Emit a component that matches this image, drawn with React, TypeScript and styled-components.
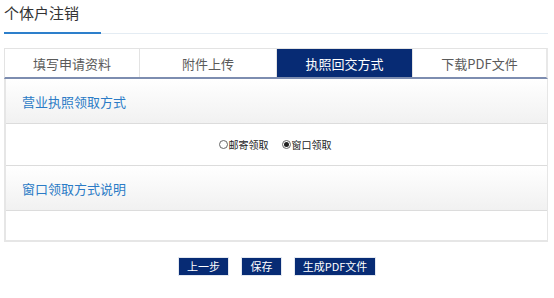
import React from "react";
import styled, { createGlobalStyle } from "styled-components";

const Global = createGlobalStyle`
  html, body { margin: 0; padding: 0; background: #fff; }
  body { font-family: "Noto Sans CJK SC", "Noto Sans", sans-serif; }
`;

const Page = styled.div`
  padding: 0 6px 0 4px;
  width: 554px;
  box-sizing: border-box;
`;

const TitleBar = styled.div`
  position: relative;
  height: 34px;
  border-bottom: 1px solid #e4ecf3;
  box-sizing: border-box;
`;

const Title = styled.h1`
  margin: 0;
  padding-top: 3px;
  font-size: 15px;
  line-height: 20px;
  font-weight: normal;
  color: #333;
`;

const TitleUnderline = styled.div`
  position: absolute;
  left: 0;
  bottom: -1px;
  width: 97px;
  height: 2px;
  background: #2d7fcb;
`;

const Tabs = styled.div`
  margin-top: 14px;
  display: grid;
  grid-template-columns: 135px 137px 136px 1fr;
  border-top: 1px solid #e3e3e3;
  border-left: 1px solid #e3e3e3;
  border-right: 2px solid #e8e8e8;
  border-bottom: 2px solid #7d8db0;
  height: 31px;
  box-sizing: border-box;
`;

const Tab = styled.div<{ $active?: boolean }>`
  display: flex;
  align-items: center;
  justify-content: center;
  font-size: 13px;
  color: ${(p) => (p.$active ? "#fff" : "#5a5a5a")};
  background: ${(p) => (p.$active ? "#072b74" : "#fff")};
  border-right: 1px solid #e3e3e3;
  &:last-child { border-right: none; }
`;

const Panel = styled.div`
  border-left: 2px solid #e6e6e6;
  border-right: 1px solid #e6e6e6;
  border-bottom: 2px solid #e6e6e6;
`;

const SectionHeader = styled.div`
  height: 44px;
  display: flex;
  align-items: center;
  padding-left: 16px;
  background: linear-gradient(to bottom, #ffffff, #f1f1f1);
  border-bottom: 1px solid #dcdcdc;
  font-size: 13px;
  color: #2b7bc6;
`;

const RadioRow = styled.div`
  height: 41px;
  display: flex;
  align-items: center;
  justify-content: center;
  gap: 13px;
  border-bottom: 1px solid #dcdcdc;
  font-size: 10px;
  color: #222;
  padding-right: 3px;
`;

const RadioLabel = styled.label`
  display: flex;
  align-items: center;
`;

const RadioDot = styled.span<{ $checked?: boolean }>`
  width: 9px;
  height: 9px;
  border: 1px solid #666;
  border-radius: 50%;
  box-sizing: border-box;
  margin-right: 1px;
  display: inline-flex;
  align-items: center;
  justify-content: center;
  &::after {
    content: "";
    width: 5px;
    height: 5px;
    border-radius: 50%;
    background: ${(p) => (p.$checked ? "#222" : "transparent")};
  }
`;

const EmptyRow = styled.div`
  height: 29px;
`;

const Buttons = styled.div`
  display: flex;
  justify-content: center;
  gap: 12px;
  margin-top: 15px;
  padding-left: 2px;
`;

const Button = styled.button<{ $w: number }>`
  width: ${(p) => p.$w}px;
  height: 19px;
  border: 1px solid #e3e8f0;
  background: #072b74;
  color: #fff;
  font-family: inherit;
  font-size: 11px;
  padding: 0;
  line-height: 17px;
`;

export default function App() {
  return (
    <>
      <Global />
      <Page>
        <TitleBar>
          <Title>个体户注销</Title>
          <TitleUnderline />
        </TitleBar>
        <Tabs>
          <Tab>填写申请资料</Tab>
          <Tab>附件上传</Tab>
          <Tab $active>执照回交方式</Tab>
          <Tab>下载PDF文件</Tab>
        </Tabs>
        <Panel>
          <SectionHeader>营业执照领取方式</SectionHeader>
          <RadioRow>
            <RadioLabel>
              <RadioDot />
              邮寄领取
            </RadioLabel>
            <RadioLabel>
              <RadioDot $checked />
              窗口领取
            </RadioLabel>
          </RadioRow>
          <SectionHeader>窗口领取方式说明</SectionHeader>
          <EmptyRow />
        </Panel>
        <Buttons>
          <Button $w={51}>上一步</Button>
          <Button $w={41}>保存</Button>
          <Button $w={82}>生成PDF文件</Button>
        </Buttons>
      </Page>
    </>
  );
}
